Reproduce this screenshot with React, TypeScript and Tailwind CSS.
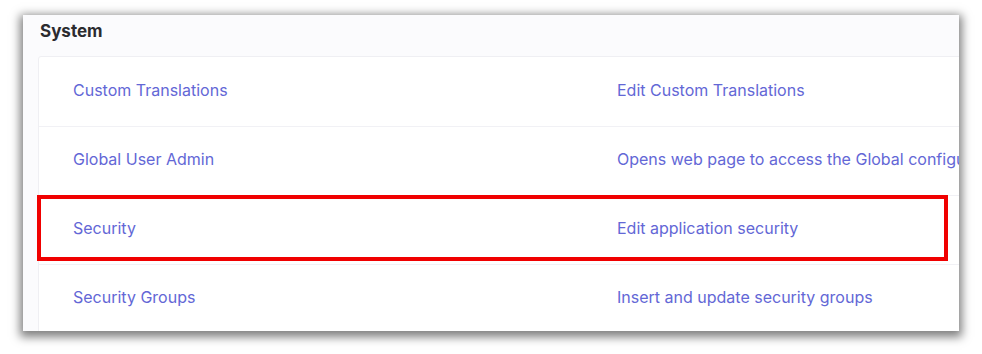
const rows = [
  { name: 'Custom Translations', desc: 'Edit Custom Translations' },
  { name: 'Global User Admin', desc: 'Opens web page to access the Global configuration' },
  { name: 'Security', desc: 'Edit application security' },
  { name: 'Security Groups', desc: 'Insert and update security groups' },
];

export default function App() {
  return (
    <div className="min-h-[354px] bg-white pt-[15px] pl-[23px]" style={{ fontFamily: 'Inter, "Noto Sans", sans-serif' }}>
      <div className="relative w-[936px] h-[316px] overflow-hidden bg-[#fbfbfd] shadow-[0_3px_9px_3px_rgba(0,0,0,0.5)]">
        <div className="h-[33px] pl-[17px] flex items-center text-[17px] font-bold text-[#2b2b2f]">System</div>
        <div className="mt-[8px] ml-[15px] w-[1000px] bg-white border border-[#efeff3] rounded-[3px]">
          {rows.map((r, i) => (
            <div
              key={r.name}
              className={`h-[69px] pb-[4px] grid grid-cols-[544px_1fr] items-center pl-[34px] text-[16px] text-[#6367d6] whitespace-nowrap ${i > 0 ? 'border-t border-[#f1f1f5]' : ''}`}
            >
              <span>{r.name}</span>
              <span>{r.desc}</span>
            </div>
          ))}
        </div>
        <div className="absolute left-[14px] top-[180px] w-[911px] h-[66px] border-4 border-[#f00000]" />
      </div>
    </div>
  );
}
